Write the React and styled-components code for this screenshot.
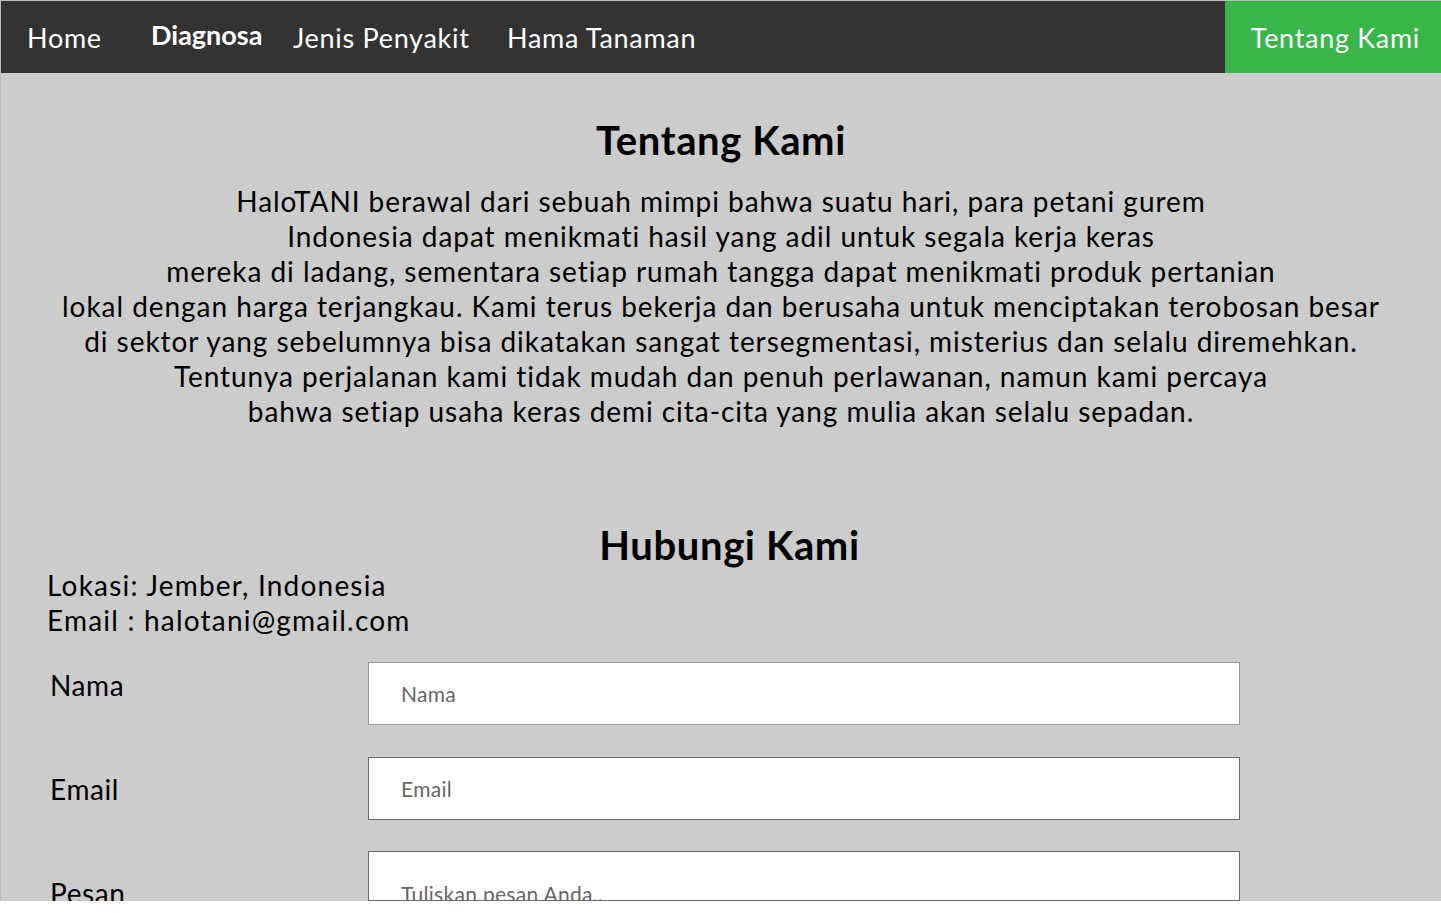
import styled, { createGlobalStyle } from "styled-components";

const GlobalStyle = createGlobalStyle`
  html, body {
    margin: 0;
    padding: 0;
    background: #ffffff;
    font-family: "Lato", "Noto Sans", sans-serif;
    font-variant-ligatures: none;
  }
  * {
    box-sizing: border-box;
  }
`;

const aboutLines = [
  "HaloTANI berawal dari sebuah mimpi bahwa suatu hari, para petani gurem",
  "Indonesia dapat menikmati hasil yang adil untuk segala kerja keras",
  "mereka di ladang, sementara setiap rumah tangga dapat menikmati produk pertanian",
  "lokal dengan harga terjangkau. Kami terus bekerja dan berusaha untuk menciptakan terobosan besar",
  "di sektor yang sebelumnya bisa dikatakan sangat tersegmentasi, misterius dan selalu diremehkan.",
  "Tentunya perjalanan kami tidak mudah dan penuh perlawanan, namun kami percaya",
  "bahwa setiap usaha keras demi cita-cita yang mulia akan selalu sepadan.",
];

const navItems = [
  { label: "Home", width: 150, first: true },
  { label: "Diagnosa", width: 142, active: true },
  { label: "Jenis Penyakit", width: 214 },
  { label: "Hama Tanaman", width: 300 },
];

export default function App() {
  return (
    <>
      <GlobalStyle />
      <PageUI>
        <NavBarUI>
          {navItems.map((item) => (
            <NavLinkUI
              key={item.label}
              $width={item.width}
              $first={item.first}
              $active={item.active}
            >
              {item.label}
            </NavLinkUI>
          ))}
          <NavRightUI>Tentang Kami</NavRightUI>
        </NavBarUI>

        <AboutUI>
          <TitleUI>Tentang Kami</TitleUI>
          <ParagraphUI>
            {aboutLines.map((line) => (
              <span key={line}>
                {line}
                <br />
              </span>
            ))}
          </ParagraphUI>
        </AboutUI>

        <ContactUI>
          <TitleUI $shift={17}>Hubungi Kami</TitleUI>
          <InfoUI>
            Lokasi: Jember, Indonesia
            <br />
            Email : halotani@gmail.com
          </InfoUI>

          <FormUI>
            <LabelColumnUI>
              <LabelUI>Nama</LabelUI>
              <LabelUI>Email</LabelUI>
              <LabelUI>Pesan</LabelUI>
            </LabelColumnUI>
            <FieldColumnUI>
              <InputUI type="text" placeholder="Nama" $light />
              <InputUI type="text" placeholder="Email" />
              <TextAreaUI placeholder="Tuliskan pesan Anda.." />
            </FieldColumnUI>
          </FormUI>
        </ContactUI>
      </PageUI>
    </>
  );
}

const PageUI = styled.div`
  height: 901px;
  background-color: #cccccc;
  border-top: 1px solid #bdbdbd;
  border-left: 1px solid #bdbdbd;
  color: #000000;
`;

const NavBarUI = styled.nav`
  display: flex;
  align-items: stretch;
  height: 72px;
  background-color: #333333;
`;

const NavLinkUI = styled.a`
  display: flex;
  align-items: center;
  width: ${(p) => p.$width}px;
  padding-left: ${(p) => (p.$first ? 26 : 0)}px;
  padding-bottom: ${(p) => (p.$active ? 6 : 0)}px;
  color: #ffffff;
  font-size: 27px;
  font-weight: ${(p) => (p.$active ? 700 : 400)};
  letter-spacing: ${(p) => (p.$active ? 0 : 0.7)}px;
  text-decoration: none;
  white-space: nowrap;
`;

const NavRightUI = styled.a`
  display: flex;
  align-items: center;
  margin-left: auto;
  padding: 0 21px 0 26px;
  background-color: #3ab54a;
  color: #ffffff;
  font-size: 27px;
  letter-spacing: 0.7px;
  white-space: nowrap;
`;

const AboutUI = styled.section`
  display: flex;
  flex-direction: column;
  align-items: center;
  padding-top: 44px;
  text-align: center;
`;

const TitleUI = styled.h2`
  margin: 0;
  padding-left: ${(p) => p.$shift || 0}px;
  font-size: 40px;
  line-height: 46px;
  font-weight: 700;
  letter-spacing: 0.6px;
  text-align: center;
`;

const ParagraphUI = styled.p`
  margin: 21px 0 0;
  font-size: 28px;
  line-height: 35px;
  letter-spacing: 0.95px;
`;

const ContactUI = styled.section`
  display: flex;
  flex-direction: column;
  padding-top: 93px;
`;

const InfoUI = styled.p`
  margin: 0;
  padding-left: 46px;
  font-size: 28px;
  line-height: 35px;
  letter-spacing: 1.2px;
`;

const FormUI = styled.form`
  display: flex;
  margin-top: 24px;
  padding-left: 46px;
`;

const LabelColumnUI = styled.div`
  display: flex;
  flex-direction: column;
  gap: 69px;
  width: 321px;
  padding: 6px 0 0 3px;
`;

const LabelUI = styled.label`
  font-size: 28px;
  line-height: 35px;
  letter-spacing: 0.6px;
`;

const FieldColumnUI = styled.div`
  display: flex;
  flex-direction: column;
  gap: 32px;
  width: 872px;
`;

const InputUI = styled.input`
  height: 63px;
  padding: 0 32px;
  border: 1px solid ${(p) => (p.$light ? "#9a9a9a" : "#6a6a6a")};
  background: #ffffff;
  font-family: "Lato", "Noto Sans", sans-serif;
  font-size: 21px;
  letter-spacing: 0.3px;
  outline: none;

  &::placeholder {
    color: #666666;
  }
`;

const TextAreaUI = styled.textarea`
  height: 50px;
  margin-top: -1px;
  padding: 29px 32px 0;
  border: 1px solid #6a6a6a;
  background: #ffffff;
  font-family: "Lato", "Noto Sans", sans-serif;
  font-size: 21px;
  letter-spacing: 0.3px;
  resize: none;
  overflow: hidden;
  outline: none;

  &::placeholder {
    color: #666666;
  }
`;
